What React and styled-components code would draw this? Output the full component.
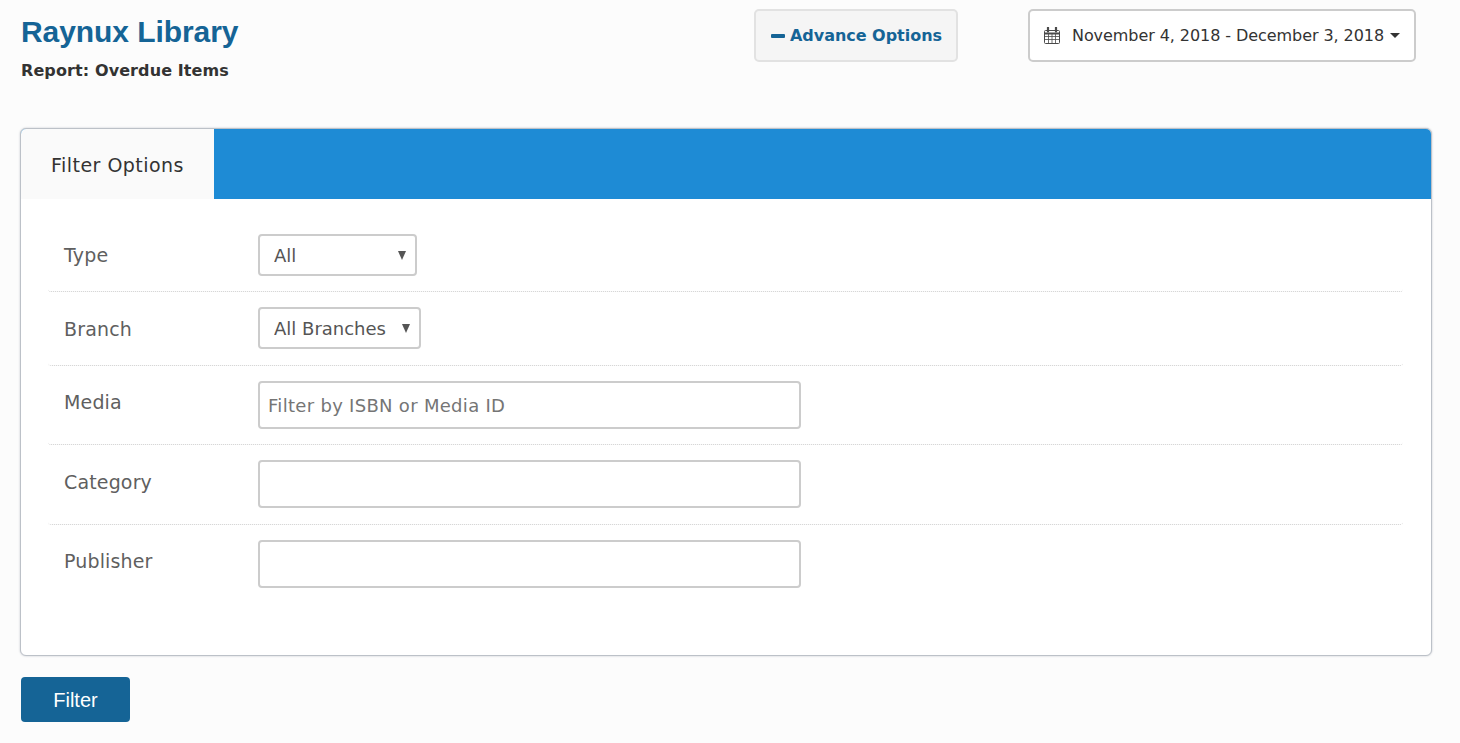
import React from "react";
import styled, { createGlobalStyle } from "styled-components";

const GlobalStyle = createGlobalStyle`
  html, body {
    margin: 0;
    padding: 0;
    background: #fcfcfc;
    font-family: "DejaVu Sans", Verdana, sans-serif;
  }
  * {
    box-sizing: border-box;
  }
`;

const Page = styled.div`
  width: 1460px;
  height: 743px;
  padding: 9px 28px 0 20px;
  overflow: hidden;
`;

const Header = styled.div`
  display: flex;
  height: 119px;
`;

const Brand = styled.div`
  width: 734px;
  padding: 5px 0 0 1px;
`;

const Title = styled.h1`
  margin: 0;
  font-family: "Liberation Sans", Arial, sans-serif;
  font-size: 30px;
  line-height: 36px;
  font-weight: 700;
  letter-spacing: -0.07px;
  color: #156496;
`;

const Subtitle = styled.div`
  margin-top: 11px;
  font-size: 16px;
  line-height: 20px;
  font-weight: 700;
  letter-spacing: 0.1px;
  color: #333;
`;

const HeaderButton = styled.button`
  display: flex;
  align-items: center;
  height: 53px;
  border-radius: 5px;
  font-family: inherit;
  font-size: 16px;
  padding: 0;
`;

const AdvanceButton = styled(HeaderButton)`
  width: 204px;
  padding-left: 15px;
  gap: 5px;
  border: 2px solid #e2e2e2;
  background: #f5f5f5;
  color: #156496;
  font-weight: 700;
  letter-spacing: -0.03px;
`;

const MinusMark = styled.span`
  width: 14px;
  height: 4px;
  border-radius: 1px;
  background: #156496;
`;

const DateButton = styled(HeaderButton)`
  width: 388px;
  margin-left: 70px;
  padding-left: 14px;
  gap: 12px;
  border: 2px solid #ccc;
  background: #fff;
  color: #333;
  letter-spacing: -0.07px;
`;

const Caret = styled.span`
  width: 0;
  height: 0;
  margin-left: -6px;
  border-left: 5px solid transparent;
  border-right: 5px solid transparent;
  border-top: 5px solid #333;
`;

const Card = styled.div`
  width: 1412px;
  height: 528px;
  background: #fff;
  border: 1px solid #bcc1c8;
  border-radius: 6px;
  box-shadow: 0 0 2px rgba(110, 120, 135, 0.45);
  overflow: hidden;
`;

const TabBar = styled.div`
  display: flex;
  height: 70px;
  background: #1e8bd5;
`;

const Tab = styled.div`
  display: flex;
  align-items: center;
  width: 193px;
  padding: 2px 0 0 30px;
  background: #fafafa;
  font-size: 19px;
  letter-spacing: 0.47px;
  color: #333;
`;

const CardBody = styled.div`
  padding: 35px 28px 0 27px;
`;

const Row = styled.div`
  display: flex;
  padding-bottom: ${(props) => props.$pad}px;
  margin-bottom: 15px;
  border-bottom: 1px dotted #cfcfcf;
  border-radius: 3px;

  &:last-child {
    border-bottom: 0;
    padding-bottom: 0;
    margin-bottom: 0;
  }
`;

const Label = styled.label`
  width: 210px;
  padding-left: 16px;
  padding-top: ${(props) => props.$top}px;
  font-size: 19px;
  line-height: 22px;
  letter-spacing: 0.15px;
  color: #5f5f5f;
`;

const SelectWrap = styled.div`
  position: relative;
  width: ${(props) => props.$width}px;
  height: 42px;

  &::after {
    content: "";
    position: absolute;
    top: 17px;
    right: 11px;
    width: 0;
    height: 0;
    border-left: 4.5px solid transparent;
    border-right: 4.5px solid transparent;
    border-top: 9px solid #555;
    pointer-events: none;
  }
`;

const Select = styled.select`
  appearance: none;
  width: 100%;
  height: 100%;
  padding: 0 0 0 14px;
  border: 2px solid #ccc;
  border-radius: 4px;
  background: #fff;
  font-family: inherit;
  font-size: 18px;
  color: #555;
`;

const Input = styled.input`
  display: block;
  width: 543px;
  height: 48px;
  padding: 0 8px;
  border: 2px solid #ccc;
  border-radius: 4px;
  background: #fff;
  font-family: inherit;
  font-size: 18px;
  letter-spacing: 0.3px;
  color: #555;

  &::placeholder {
    color: #757575;
    opacity: 1;
  }
`;

const FilterButton = styled.button`
  display: block;
  width: 109px;
  height: 45px;
  margin: 21px 0 0 1px;
  padding: 2px 0 0;
  border: 0;
  border-radius: 4px;
  background: #156496;
  color: #fff;
  font-family: "Liberation Sans", Arial, sans-serif;
  font-size: 20px;
`;

function CalendarIcon() {
  return (
    <svg width="16" height="17" viewBox="0 0 16 17" fill="none" stroke="#4a4a4a" strokeWidth="1">
      <rect x="0.5" y="3.5" width="15" height="13" rx="1" />
      <path d="M0.5 6.5h15" strokeWidth="2" />
      <path d="M0.5 9.5h15M0.5 12.5h15M4.5 6v10M8 6v10M11.5 6v10" strokeWidth="0.8" />
      <path d="M4 0.5v4M12 0.5v4" strokeWidth="2.2" strokeLinecap="round" />
    </svg>
  );
}

export default function App() {
  return (
    <>
      <GlobalStyle />
      <Page>
        <Header>
          <Brand>
            <Title>Raynux Library</Title>
            <Subtitle>Report: Overdue Items</Subtitle>
          </Brand>
          <AdvanceButton>
            <MinusMark />
            Advance Options
          </AdvanceButton>
          <DateButton>
            <CalendarIcon />
            November 4, 2018 - December 3, 2018
            <Caret />
          </DateButton>
        </Header>
        <Card>
          <TabBar>
            <Tab>Filter Options</Tab>
          </TabBar>
          <CardBody>
            <Row $pad={15}>
              <Label $top={10}>Type</Label>
              <SelectWrap $width={159}>
                <Select defaultValue="All">
                  <option>All</option>
                </Select>
              </SelectWrap>
            </Row>
            <Row $pad={16}>
              <Label $top={11}>Branch</Label>
              <SelectWrap $width={163}>
                <Select defaultValue="All Branches">
                  <option>All Branches</option>
                </Select>
              </SelectWrap>
            </Row>
            <Row $pad={15}>
              <Label $top={10}>Media</Label>
              <Input placeholder="Filter by ISBN or Media ID" />
            </Row>
            <Row $pad={16}>
              <Label $top={11}>Category</Label>
              <Input />
            </Row>
            <Row>
              <Label $top={10}>Publisher</Label>
              <Input />
            </Row>
          </CardBody>
        </Card>
        <FilterButton>Filter</FilterButton>
      </Page>
    </>
  );
}
